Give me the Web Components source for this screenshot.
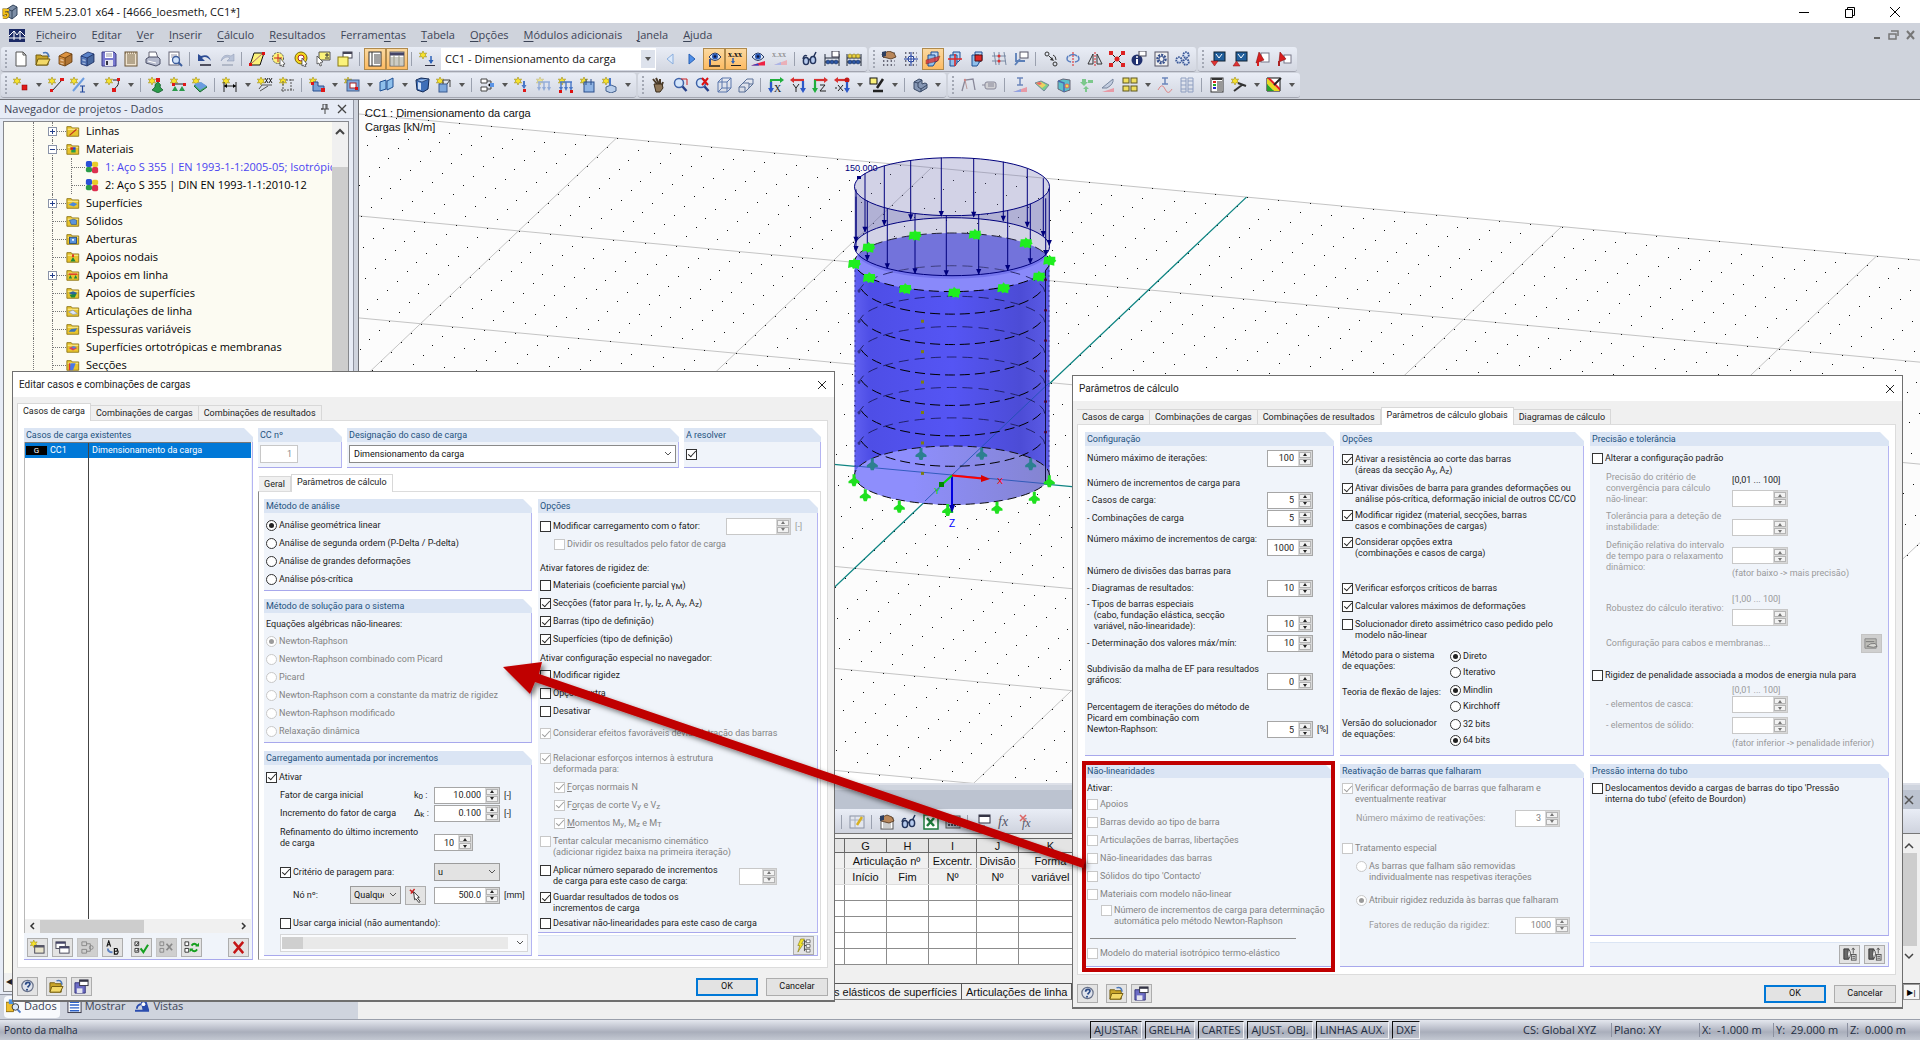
<!DOCTYPE html>
<html lang="pt">
<head>
<meta charset="utf-8">
<title>RFEM 5.23.01 x64 - [4666_loesmeth, CC1*]</title>
<style>
html,body{margin:0;height:100%;overflow:hidden;background:#f0f0f0}
body{font:11px/14px "Open Sans","Noto Sans",sans-serif;color:#1e1e1e}
</style>
</head>
<body>
<rfem-app></rfem-app>
<script>
const star='<path d="M4 0l1 2.4L7.6 2 6.2 4l1.4 2L5 5.6 4 8 3 5.6.4 6 1.8 4 .4 2 3 2.4z" fill="#f7e32a" stroke="#a08c10" stroke-width=".6"/>';
const cube=(c,d)=>`<path d="M2 5l6-3 6 2v7l-6 4-6-3z" fill="${c}" stroke="${d}"/><path d="M2 5l6 2 6-3M8 7v8" fill="none" stroke="${d}"/>`;
const cabinet=(c,d)=>`<path d="M2 5l7-4 6 2v8l-7 4-6-2z" fill="${c}" stroke="${d}" stroke-width=".8"/><path d="M2 5l6 2 7-4M8 7v8" fill="none" stroke="${d}" stroke-width=".8"/><path d="M3 7.500l4 1v2.500l-4-1zM3 11l4 1v2l-4-1z" fill="#fff" opacity=".45" stroke="${d}" stroke-width=".6"/><path d="M8 7l7-4v8l-7 4z" fill="#000" opacity=".2"/>`;
const lens='<circle cx="7" cy="6" r="4.500" fill="#d4e6fb" stroke="#3e62a8" stroke-width="1.500"/><path d="M10.500 9.500l4 4.500" stroke="#27408a" stroke-width="2.500"/>';
const folder='<path d="M1 3h5l1 1.500h7.500V14H1z" fill="#e8c42e" stroke="#8d7312"/><path d="M2 6h12" stroke="#fff3a8"/>';
const axis=(a,b,t)=>`<path d="M2 3h11M3 3v11" stroke="${a}" stroke-width="2.200"/><path d="M12 0l4 3-4 3z" fill="${a}"/><path d="M3 5v9" stroke="${b}" stroke-width="2.200"/><path d="M0 11l3 5 3-5z" fill="${b}"/><text x="6" y="15" font-size="10" font-family="Liberation Serif,serif" fill="#222">${t}</text>`;
const eye='<path d="M2 6q6-8 12 0-6 7-12 0z" fill="#dfe9f8" stroke="#2a3c66"/><circle cx="8" cy="5.500" r="3" fill="#2c5cb8"/><circle cx="8" cy="5.500" r="1.300" fill="#0a1440"/>';
const abacus='<path d="M1 3v12M15 3v12M1 7h14M1 11h14" stroke="#202838" fill="none"/><g fill="#2c56a6" stroke="#10264f" stroke-width=".5"><circle cx="4" cy="11" r="2"/><circle cx="8" cy="11" r="2"/><circle cx="12" cy="11" r="2"/></g>';
const plane='<path d="M1 5l6-2v9l-6 2zM8 4l6-3v9l-6 3z" fill="#8fc0ec" stroke="#1e4f92"/>';
const cutp='<path d="M6 1h7v8l-2 2H6z" fill="#b9d6f4" stroke="#1e4f92"/><path d="M3 4h7v8l-2 3H3z" fill="#8fc0ec" stroke="#1e4f92"/>';
const glasses='<path d="M1 8q1-5 4-3M14 1l-3 6" stroke="#24345c" stroke-width="1.500" fill="none"/><ellipse cx="4" cy="10" rx="2.600" ry="3.600" fill="#b7cbee" stroke="#24345c" stroke-width="1.500"/><ellipse cx="11" cy="9" rx="2.600" ry="3.600" fill="#b7cbee" stroke="#24345c" stroke-width="1.500"/><path d="M6.500 9l2-1" stroke="#24345c" stroke-width="1.500"/>';
const arrowsDown='<path d="M2 5h12M3 5v6M8 5v6M13 5v6" stroke="#4a78c8" stroke-width="1.400" fill="none"/><path d="M1 10l2 4 2-4zM6 10l2 4 2-4zM11 10l2 4 2-4z" fill="#4a78c8"/>';
const hand='<path d="M1 4l7-3 5 2 2 4-5 2-8-2z" fill="#b8865a" stroke="#4a3018" stroke-width=".8"/><path d="M1 2l4-1v5L1 7z" fill="#2c3e60"/>';
const gridd='<path d="M2 2h12M2 6h12M2 10h12M2 14h12" stroke="#445" stroke-width="1.400" stroke-dasharray="1.400 2.400"/>';
const red='<rect x="10" y="10" width="4" height="4" fill="#e01818"/>';
const I={
logo:'<path d="M5 5l6-4 4 2v8l-5 4-5-3z" fill="#7d8ea6" stroke="#33445c"/><path d="M5 5l5 2 5-4M10 7v8" stroke="#33445c" fill="none"/><path d="M7 6H2v4q4-2 4 1t-5 2" fill="none" stroke="#7a5a00" stroke-width="3"/><path d="M7 6H2v4q4-2 4 1t-5 2" fill="none" stroke="#f4c21a" stroke-width="1.800"/>',
bridge:'<rect x="0" y="2" width="16" height="13" fill="#1c2a66"/><path d="M0 11h16M5 4v9M11 4v9M5 4L0 9M5 4l3 4 3-4 5 5" stroke="#fff" fill="none"/>',
doc:'<path d="M3 1h7l3 3v11H3z" fill="#fff" stroke="#555"/><path d="M10 1v3h3" fill="none" stroke="#555"/>',
open:'<path d="M1 4h5l1 1h6v9H1z" fill="#c9a52a" stroke="#725c10"/><path d="M3 8h12l-3 6H1z" fill="#f3d968" stroke="#725c10"/><path d="M8 2q5-2 6 4" stroke="#4a78b8" fill="none" stroke-width="1.600"/>',
cab1:cabinet('#dc9240','#6a3c0c'),cab2:cabinet('#5a82c8','#1c2f66'),
save:'<path d="M1 1h12l2 2v12H1z" fill="#7a7ad0" stroke="#3c3c86"/><rect x="4" y="1" width="8" height="6" fill="#fff"/><rect x="4" y="9" width="8" height="6" fill="#e4e4ee"/><path d="M5 3h6M5 5h6" stroke="#99a"/><rect x="5" y="10" width="2" height="4" fill="#334"/>',
report:'<rect x="2" y="1" width="12" height="14" fill="#efe3cf" stroke="#6a5535"/><path d="M4 4h8M4 6h8M4 8h8M4 10h8M4 12h8" stroke="#7d6a4a"/><path d="M2 2h12" stroke="#6a5535" stroke-dasharray="1 1"/>',
print:'<path d="M4 1h7l2 6H4z" fill="#fff" stroke="#667"/><path d="M1 8l3-2h9l2 2v5l-4 2-10-3z" fill="#b4b9cc" stroke="#4a4f66"/><path d="M3 10l8 2" stroke="#fff"/>',
preview:'<rect x="2" y="1" width="10" height="13" fill="#fff" stroke="#667"/><path d="M4 4h6M4 6h4" stroke="#99a"/><circle cx="9" cy="9" r="3.500" fill="#cfe2fa" stroke="#3c5d9c" stroke-width="1.300"/><path d="M11.500 11.500L15 15" stroke="#3c5d9c" stroke-width="2"/>',
undo:'<path d="M1 3v7h7L5 7q4-3 9 3-2-8-10-5z" fill="#2c4c94"/><path d="M3 14h11" stroke="#223" stroke-width="1.500"/>',
redo:'<path d="M15 3v7H8l3-3Q7 4 2 10q2-8 10-5z" fill="#b9c3d8" stroke="#8a96b0" stroke-width=".5"/><path d="M3 14h11" stroke="#a3abbb" stroke-width="1.500"/>',
plane1:'<path d="M5 2h10l-4 12H1z" fill="#fbf27a" stroke="#111"/><path d="M3 12L14 2" stroke="#a66"/><rect x="0" y="12" width="3" height="3" fill="#d11"/><rect x="13" y="1" width="3" height="3" fill="#d11"/>',
pick1:'<circle cx="7" cy="7" r="5.500" fill="#fbf27a" stroke="#555" stroke-dasharray="2 1"/><path d="M7 3v8M3 7h8" stroke="#c22"/><path d="M9 7l5 6-2 .5 1 2-1.500.5-1-2L9 15z" fill="#fff" stroke="#333" stroke-width=".7"/>',
pick2:'<circle cx="8" cy="7" r="6" fill="#f4d81e" stroke="#7a6900"/><circle cx="8" cy="7" r="3" fill="#fff" stroke="#a22"/><path d="M9 7l5 6-2 .5 1 2-1.500.5-1-2L9 15z" fill="#fff" stroke="#333" stroke-width=".7"/>',
pick3:'<path d="M4 1h11v8H4z" fill="#fbf27a" stroke="#555"/><path d="M10 4h4M12 2v4M10 7h4" stroke="#333"/><path d="M2 5l6 6-2.500.5 1 3-1.500.5-1-3L2 13z" fill="#fff" stroke="#333" stroke-width=".7"/>',
win1:'<rect x="6" y="1" width="9" height="6" fill="#fff" stroke="#445"/><path d="M6 2h9" stroke="#445" stroke-width="2"/><rect x="1" y="6" width="10" height="9" fill="#fbf27a" stroke="#8a7a10"/>',
list:'<rect x="2" y="1" width="12" height="14" fill="#fff" stroke="#333"/><path d="M5 1v14" stroke="#333"/><path d="M7 4h6M7 6h6M7 8h6M7 10h6M7 12h6" stroke="#444"/>',
tbl:'<rect x="1" y="1" width="14" height="14" fill="#fff" stroke="#666"/><path d="M1 3h14" stroke="#446" stroke-width="3"/><path d="M1 7h14M1 9h14M1 11h14M1 13h14M5 4v11M10 4v11" stroke="#998"/>',
newload:star+'<path d="M12 5v7" stroke="#2d62b8" stroke-width="1.500"/><path d="M9.500 9l2.500 4 2.500-4z" fill="#2d62b8"/><path d="M6 14.500h10" stroke="#334"/>',
prev:'<path d="M11 3L5 8l6 5z" fill="#dbe9fb" stroke="#8aaede"/>',next:'<path d="M5 3l6 5-6 5z" fill="#4f8fe8" stroke="#2860b4"/>',
eye1:'<g transform="translate(1 0)">'+eye+'</g><path d="M4 8v6" stroke="#2d4c98" stroke-width="2"/><path d="M3 15h11" stroke="#222" stroke-width="1.500"/>',
xxx:'<text x="0" y="6" font-size="8" font-weight="700" font-family="Liberation Serif,serif" fill="#111">x.xx</text><path d="M5 7v4" stroke="#2d62b8" stroke-width="1.500"/><path d="M3 10l2 3 2-3z" fill="#2d62b8"/><path d="M3 14.500h10" stroke="#222"/>',
eye2:eye+'<path d="M1 14.500L15 10v4.500z" fill="#e24"/><path d="M1 14.500h8l-1-2z" fill="#24c"/>',
xxx2:'<text x="0" y="6" font-size="8" font-family="Liberation Serif,serif" fill="#777">x.xx</text><path d="M2 14L15 9v5z" fill="#eab0b8"/><path d="M2 14h7V11z" fill="#aab6e8"/>',
glasses,aba1:abacus+'<rect x="8" y="0" width="7" height="6" fill="#fff" stroke="#334"/>',aba2:abacus+'<g fill="#e8d040" stroke="#6b5a00" stroke-width=".5"><circle cx="4" cy="5" r="2"/><circle cx="8" cy="5" r="2"/><circle cx="12" cy="5" r="2"/></g>',
handgrid:gridd+'<g transform="translate(0 -1)">'+hand+'</g>',snap:gridd+'<circle cx="8" cy="8" r="3" fill="#fff" stroke="#1c3da0"/><path d="M8 1v14M1 8h14" stroke="#1c3da0"/>',
pl1:cutp+'<path d="M1 9l14-4-2 5-12 3z" fill="#e02828" opacity=".75" stroke="#611" stroke-width=".5"/>',pl2:cutp+'<path d="M1 8h14M8 3v12" stroke="#e02828" stroke-width="1.600"/>',pl3:cutp+'<path d="M6 4h7v6H6z" fill="#e02828" stroke="#511"/>',
net:'<path d="M3 1l2 13M8 1v13M13 1l2 13M1 5h14M1 10h14" stroke="#7a8aa4" fill="none"/><circle cx="8" cy="5" r="1.500" fill="#d33"/><circle cx="8" cy="10" r="1.500" fill="#d33"/>',
frame:'<rect x="7" y="1" width="8" height="6" fill="#fff" stroke="#556"/><path d="M2 14L7 8M3 2v8h9" stroke="#5b7fb8" stroke-width="1.800" fill="none"/>',
move:'<circle cx="4" cy="3" r="2" fill="none" stroke="#333"/><circle cx="12" cy="13" r="2" fill="none" stroke="#333"/><path d="M6 5l3 3M10 4q3 1 3 5" stroke="#333" fill="none"/><path d="M7 9l4 1-2-4z" fill="#333"/>',
rot:'<path d="M13 5q3 5-3 6M3 5q-3 5 3 6M4 5q4-3 8 0" stroke="#5b80c0" stroke-width="1.600" fill="none"/><path d="M8 1v14" stroke="#d22" stroke-dasharray="2 1"/>',
mir:'<path d="M6 3v10H1zM10 3v10h5z" fill="none" stroke="#333"/><path d="M8 1v14" stroke="#d22" stroke-dasharray="2 1"/>',
cross:'<path d="M2 2l12 12M14 2L2 14" stroke="#111"/><g fill="#d22"><rect x="0" y="0" width="4" height="4"/><rect x="12" y="0" width="4" height="4"/><rect x="0" y="12" width="4" height="4"/><rect x="12" y="12" width="4" height="4"/><circle cx="8" cy="8" r="2.500"/></g>',
info:'<circle cx="6" cy="9" r="5.500" fill="#20306e"/><path d="M6 8v5" stroke="#fff" stroke-width="2"/><circle cx="6" cy="6" r="1" fill="#fff"/><rect x="8" y="0" width="7" height="5" fill="#fff" stroke="#445"/>',
gear:'<rect x="2" y="1" width="13" height="14" fill="#f0f0f0" stroke="#556"/><circle cx="8.500" cy="8" r="4" fill="none" stroke="#37508c" stroke-width="2.500" stroke-dasharray="2 1"/><circle cx="8.500" cy="8" r="2.500" fill="none" stroke="#37508c"/>',
gears:'<g fill="#dbe5f6" stroke="#3a5898" stroke-width="1.800" stroke-dasharray="1.600 .8"><circle cx="4" cy="9" r="2.800"/><circle cx="11" cy="4" r="2.800"/><circle cx="11" cy="11" r="2.800"/></g>',
mon1:'<rect x="4" y="1" width="11" height="9" fill="#215f9c" stroke="#123"/><path d="M6 3l3 4 3-4" stroke="#fff" fill="none"/><path d="M1 10h7l-3.500 5z" fill="#e03434" stroke="#811" stroke-width=".5"/>',
mon2:'<rect x="4" y="1" width="11" height="9" fill="#215f9c" stroke="#123"/><path d="M6 3l3 4 3-4" stroke="#fff" fill="none"/><path d="M1 15h7l-3.500-5z" fill="#e03434" stroke="#811" stroke-width=".5"/>',
ex1:'<rect x="7" y="2" width="8" height="9" fill="#fff" stroke="#778"/><path d="M5 1l5 8-8 3z" fill="#d81e1e" stroke="#700" stroke-width=".5"/><path d="M4 11v4" stroke="#d81e1e" stroke-width="2"/>',
ex2:'<rect x="8" y="4" width="7" height="8" fill="#fff" stroke="#778"/><path d="M4 1l6 7-7 3z" fill="#d81e1e" stroke="#700" stroke-width=".5"/><path d="M3 10v5" stroke="#a22" stroke-width="2"/>',
node:star+'<rect x="9" y="8" width="5" height="5" fill="#e01818" stroke="#800" stroke-width=".5"/>',
line:star+'<path d="M4 14L14 3" stroke="#222"/><rect x="2" y="12" width="3" height="3" fill="#e01818"/><rect x="12" y="1" width="4" height="3" fill="#e01818"/>',
bar:star+'<path d="M3 14L14 1" stroke="#6c9de0" stroke-width="2"/><path d="M10 9h5M12.500 9v6M10 15h5" stroke="#22489c" stroke-width="1.200"/>',
arc:star+'<path d="M8 3h5q2 5-4 9" fill="none" stroke="#222"/><rect x="12" y="1" width="3" height="3" fill="#e01818"/><rect x="7" y="11" width="4" height="4" fill="#e01818"/>',
sup1:star+'<rect x="8" y="1" width="4" height="4" fill="#e01818"/><path d="M10 5q4 3 2 5l3 3-5 3-6-3 3-3q-1-3 3-5z" fill="#2b9a4a" stroke="#0e5424" stroke-width=".7"/>',
sup2:star+'<path d="M3 7h12" stroke="#222"/><rect x="2" y="6" width="3" height="3" fill="#e01818"/><rect x="13" y="6" width="3" height="3" fill="#e01818"/><path d="M5 9l3 5H2zM12 9l3 5H9z" fill="#2b9a4a"/>',
sup3:star+'<path d="M2 9l7-3 6 4-7 5z" fill="#4ab06c" stroke="#1c6836"/><path d="M2 7l7-2 6 4-7 4z" fill="#6a9ce0"/>',
dim:star+'<path d="M2 5v10M14 5v10M2 9h12" stroke="#222"/><path d="M2 9l3-2v4zM14 9l-3-2v4z"/>',
dimxx:star+'<path d="M8 1l3 5M11 1L8 6M12 1l3 5M15 1l-3 5" stroke="#111" stroke-width=".9"/><path d="M2 12l3-4h10M3 14l8-5" stroke="#555" fill="none"/>',
axes:star+'<path d="M4 4v11M12 2v12M2 13h13M7 3h8" stroke="#555" stroke-dasharray="2 1"/>',
surf:star+'<path d="M4 5h5v4h6v5H4z" fill="#7aa0d4" stroke="#274e90"/><rect x="2" y="5" width="3" height="3" fill="#e01818"/><rect x="12" y="11" width="4" height="4" fill="#e01818"/>',
hole:star+'<rect x="3" y="3" width="12" height="11" fill="#7fa8dc" stroke="#44618e"/><rect x="6" y="6" width="6" height="5" fill="#fff" stroke="#a22"/><rect x="11" y="10" width="3" height="3" fill="#d11"/>',
sol:plane,cyl:'<path d="M2 3l5-2 8 1-1 10-5 3-6-2z" fill="#3f6fb8" stroke="#122a58"/><path d="M2 3l6 2 7-3" fill="#9fc2f0" stroke="#122a58" stroke-width=".6"/><path d="M4 5l3 1v7l-3-1z" fill="#cfe0f8"/>',
cube2:star+'<rect x="3" y="7" width="8" height="8" fill="#7fa8dc" stroke="#3a5a90"/><path d="M7 3h7v7" fill="none" stroke="#444"/><path d="M7 3v4M14 3l-3 4" stroke="#444"/>',
rel:'<path d="M2 2h6v4H2zM2 10h6v4H2z" fill="#fff" stroke="#444"/><path d="M8 4h4v8H8" fill="none" stroke="#444"/><path d="M9 8l3-2.500v5z" /><rect x="11" y="6" width="4" height="4" fill="#5a94e6"/>',
ld1:star+'<path d="M10 4v7" stroke="#4a78c8" stroke-width="2"/><path d="M7.500 8l2.500 4 2.500-4z" fill="#4a78c8"/><rect x="9" y="12" width="3" height="3" fill="#e01818"/>',
ld2:'<g opacity=".5">'+star+arrowsDown+'</g>',ld3:star+arrowsDown+'<rect x="1" y="13" width="3" height="3" fill="#d11"/><rect x="12" y="13" width="3" height="3" fill="#d11"/>',
ld4:star+'<rect x="4" y="5" width="10" height="10" fill="#8fb4e4" stroke="#2a4e8c"/><path d="M6 2v6M11 2v6" stroke="#2a4e8c"/>',ld5:star+'<path d="M4 10l5-2 5 2v4l-5 2-5-2z" fill="#b8cdea" stroke="#44618e"/><path d="M8 1v8" stroke="#4a78c8" stroke-width="2"/>',
hand:'<path d="M3 2l4 5M6 1l3 6M10 2v6M13 5l-2 5" stroke="#4a3a28" stroke-width="2"/><path d="M4 7h8l1 4-3 4H6z" fill="#8e7658" stroke="#3a2d1c"/>',
zoom1:lens+'<path d="M9 2h6v6" stroke="#c22" fill="none"/>',zoom2:lens+'<path d="M8 1l6 7M14 1L8 8" stroke="#d11" stroke-width="2"/>',
wire:'<path d="M2 5l4-4h9v10l-4 4H2zM2 5h9v10M11 5l4-4M6 1v10h9M6 11l-4 4" fill="none" stroke="#5a76ac"/>',
boxes:'<path d="M1 10h6v5H1zM5 6h6v5M9 2h6v5h-4M1 10l4-4M7 15l8-8M5 6l4-4" fill="none" stroke="#5a7198"/>',
ax1:axis('#1fae3c','#2c58c8','X'),ax2:'<g transform="translate(16 0) scale(-1 1)"><path d="M2 3h11" stroke="#d83030" stroke-width="2.200"/><path d="M12 0l4 3-4 3z" fill="#d83030"/><path d="M3 4v10" stroke="#2c58c8" stroke-width="2.200"/><path d="M0 11l3 5 3-5z" fill="#2c58c8"/></g><path d="M3 7l3 4 3-4M6 11v4" stroke="#222" fill="none"/>',ax3:'<path d="M2 3h11" stroke="#d83030" stroke-width="2.200"/><path d="M12 0l4 3-4 3z" fill="#d83030"/><path d="M3 3v11" stroke="#1fae3c" stroke-width="2.200"/><path d="M0 11l3 5 3-5z" fill="#1fae3c"/><path d="M8 8h5l-5 6h6" stroke="#222" fill="none"/>',ax4:'<path d="M3 3h8" stroke="#d83030" stroke-width="2.200"/><path d="M4 0L0 3l4 3z" fill="#d83030"/><circle cx="13" cy="3" r="2.500" fill="#c01818"/><path d="M13 5v9" stroke="#2c58c8" stroke-width="2.200"/><path d="M10 11l3 5 3-5z" fill="#2c58c8"/><path d="M1 11h2M4 8l5 6M9 8l-5 6" stroke="#222"/>',
micro:'<rect x="1" y="1" width="7" height="6" fill="#fbf27a" stroke="#111"/><path d="M14 2L8 11M4 14h10" stroke="#222" stroke-width="2.500"/>',
vol:'<path d="M2 5l5-3 3 1v4l3-1 2 1v4l-7 4-6-3z" fill="#8697b4" stroke="#3a4a66"/><path d="M2 5l4 1v4l3 2v3M6 6l4-3M9 12l6-4" fill="none" stroke="#3a4a66"/>',
fr:'<path d="M2 14L5 3l8-1 2 11" fill="none" stroke="#889" stroke-width="1.300"/><path d="M5 3l2 9" stroke="#b99"/><circle cx="5" cy="3" r="1.200" fill="#c88"/>',
film:'<rect x="3" y="5" width="11" height="7" rx="2" fill="#d0d0d4" stroke="#889"/><path d="M3 8H0M6 7h6M6 9h6" stroke="#889"/>',
ib:'<path d="M5 1h6M8 1v7M5 8h6" stroke="#6c86bc" stroke-width="1.500"/><path d="M1 15h14v-5z" fill="#e79aa6"/><path d="M1 15h8v-3z" fill="#8fa4e4"/>',
rainb:'<path d="M1 6l6-2 8 4-5 6z" fill="#7ad08c" stroke="#789"/><path d="M2 6l5-1 5 3-4 3z" fill="#f0d060"/><path d="M2 6l4-1 2 2-3 1z" fill="#e66"/>',
rc:'<path d="M2 4l5-2 7 1v10l-6 2-6-3z" fill="#5cc0cc" stroke="#667"/><path d="M2 4l6 2v9" stroke="#4a68b0" fill="none" stroke-width="1.500"/><circle cx="11" cy="9" r="2" fill="#e8e050" stroke="#d66"/>',
gr:'<path d="M4 2h4v3h2L6 9 2 5h2zM10 3h5v3h-5z" fill="#7cc88c"/><path d="M5 12l3-3 3 3H9v3H7v-3z" fill="#7cc88c"/>',
knife:'<path d="M2 11L13 2q1 5-6 9z" fill="#c3cde0" stroke="#78879f"/><path d="M2 15h12v-4z" fill="#e79aa6"/>',
four:'<g fill="#f0e060" stroke="#5d5620"><rect x="1" y="1" width="6" height="5"/><rect x="9" y="1" width="6" height="5"/><rect x="1" y="9" width="6" height="5"/><rect x="9" y="9" width="6" height="5"/></g>',
mode:'<path d="M5 1h6M8 1v6M5 7h6" stroke="#6c86bc" stroke-width="1.500"/><path d="M1 13q4-8 7-1t7 0" stroke="#d88" fill="none"/>',
cols:'<g fill="none" stroke="#8e9ec0"><path d="M2 1h5v14H2zM9 1h5v14H9zM2 4h5M2 8h5M2 12h5M9 4h5M9 8h5M9 12h5"/></g>',
legend:'<rect x="2" y="1" width="12" height="14" fill="#fff" stroke="#333"/><path d="M3 2h10" stroke="#333" stroke-width="2"/><path d="M4 5h3" stroke="#d22" stroke-width="2"/><path d="M4 8h3" stroke="#2a2" stroke-width="2"/><path d="M4 11h3" stroke="#22c" stroke-width="2"/><path d="M8 5h5M8 7h5M8 9h5M8 11h5M8 13h5" stroke="#333"/>',
wand:star+'<path d="M7 6l8 3M3 14l8-6" stroke="#333" stroke-width="2"/>',
colr:'<path d="M1 1h13v13H1z" fill="#fff" stroke="#111"/><path d="M1 1l13 13H8L1 7z" fill="#e8d820"/><path d="M1 7l7 7H1z" fill="#28a028"/><path d="M1 1l13 13V11L4 1z" fill="#d22"/><path d="M15 1L8 8" stroke="#222" stroke-width="2"/>',
tedit:'<rect x="1" y="2" width="14" height="12" fill="#e3e6ee" stroke="#8a92a4"/><path d="M1 6h14M6 2v12" stroke="#a8b0c0"/><path d="M13 3l-5 8" stroke="#d8b020" stroke-width="2.500"/>',
thand:'<rect x="2" y="4" width="12" height="11" fill="#fff" stroke="#555"/><path d="M4 9h8M4 11h8M4 13h8" stroke="#999"/>'+hand,
excel:'<rect x="1" y="1" width="14" height="14" fill="#fff" stroke="#1e7a3c" stroke-width="1.500"/><path d="M4 4l7 8M11 4l-7 8" stroke="#1e7a3c" stroke-width="2.500"/>',
calc:'<rect x="1" y="2" width="14" height="12" fill="#b9bfca" stroke="#555"/><path d="M3 5h10M3 8h10M3 11h10" stroke="#445" stroke-width="2" stroke-dasharray="2 1"/>',
win2:'<rect x="4" y="1" width="11" height="8" fill="#fff" stroke="#334"/><path d="M4 2h11" stroke="#334" stroke-width="2"/><path d="M2 12h8M5 14h8" stroke="#555"/>',
fx:'<text x="1" y="12" font-size="14" font-style="italic" font-family="Liberation Serif,serif" fill="#556">fx</text>',
fxr:'<text x="3" y="13" font-size="12" font-style="italic" font-family="Liberation Serif,serif" fill="#556">fx</text><path d="M1 1l6 6M7 1L1 7" stroke="#d66" stroke-width="1.500"/>',
help:'<circle cx="8" cy="7.500" r="6" fill="#dfe3ec" stroke="#68728a" stroke-width="1.300"/><path d="M6 6q0-2.500 2.500-2.500t2 2.500Q9.500 7.500 8 9" stroke="#2b4a86" stroke-width="1.800" fill="none"/><circle cx="7.500" cy="11.500" r="1.100" fill="#2b4a86"/>',
save2:'<path d="M1 4h11v11H1z" fill="#6c6cc4" stroke="#33337a"/><rect x="3" y="10" width="6" height="5" fill="#e4e4ee"/><rect x="6" y="1" width="9" height="6" fill="#fff" stroke="#334"/><path d="M6 2h9" stroke="#334" stroke-width="2"/>',
nwin:star+'<rect x="5" y="6" width="10" height="8" fill="#e9e4cc" stroke="#445"/><path d="M5 7h10" stroke="#556" stroke-width="2"/>',
cwin:'<rect x="1" y="2" width="10" height="7" fill="#fff" stroke="#445"/><path d="M1 3h10" stroke="#446" stroke-width="2"/><rect x="5" y="7" width="10" height="7" fill="#fff" stroke="#445"/><path d="M5 8h10" stroke="#446" stroke-width="2"/>',
cmb:'<g fill="none" stroke="#888"><path d="M2 2h5v4H2zM2 10h5v4H2zM7 4h4v8H7"/><circle cx="12" cy="8" r="2"/></g>',
ab:'<path d="M2 7l2-6 2 6M3 5h2M10 9h2q2 0 1 2 2 1 0 4h-3zM10 12h3" stroke="#111" stroke-width="1.200" fill="none"/><path d="M3 9q0 4 5 4" stroke="#5b80c0" stroke-width="2" fill="none"/>',
chk:'<path d="M1 2h4v4H1zM1 9h4v4H1z" fill="#fff" stroke="#333"/><path d="M2 4l1 1 2-3M2 11l1 1 2-3" stroke="#333" fill="none"/><path d="M7 9l3 4 5-8" stroke="#16a020" stroke-width="2.200" fill="none"/>',
uchk:'<path d="M1 2h4v4H1zM1 9h4v4H1z" fill="none" stroke="#888"/><path d="M8 4l6 7M14 4l-6 7" stroke="#888" stroke-width="1.800"/>',
swp:'<path d="M1 2h4v4H1zM1 9h4v4H1z" fill="#fff" stroke="#333"/><path d="M8 6q3-4 6 0M14 10q-3 4-6 0" stroke="#16a020" stroke-width="2" fill="none"/><path d="M12 7h4V3zM10 9H6v4z" fill="#16a020"/>',
del:'<path d="M3 2l10 12M13 2L3 14" stroke="#c41414" stroke-width="2.600"/>',
pick:'<path d="M2 2l5 4M7 1L3 6" stroke="#c22" stroke-width="1.500"/><path d="M6 4l6 6-2 .5 3 4-1.500 1-3-4-1.500 1z" fill="#fff" stroke="#333"/>',
bolt:'<path d="M5 1h4L6 6h2l-6 9 2-7H2z" fill="#f4e42a" stroke="#77700e" stroke-width=".6"/><path d="M9 2v12M9 4h6M9 8h6M9 12h6" stroke="#444"/><path d="M11 2h4v3h-4zM11 7h4v3h-4zM11 12h4v3h-4z" fill="#fff" stroke="#444" stroke-width=".7"/>',
cfg:'<path d="M1 3h12v10H1z" fill="#bdbdb8" stroke="#888"/><path d="M2 6h9M3 11q4-4 9-3l2 3-4 1z" fill="#d8d8d4" stroke="#777"/>',
cl1:'<path d="M2 2h5q-2 6 0 11H2z" fill="#6a6a6a" stroke="#333"/><path d="M7 2q4 5 0 11-2-5 0-11z" fill="#fff" stroke="#444"/><path d="M12 1v6M10.500 3L12 1l1.500 2" stroke="#555" fill="none"/><rect x="10" y="8" width="5" height="6" fill="#ddd" stroke="#555"/><path d="M11 10h3M11 12h3" stroke="#555"/>',
tdata:'<path d="M0 4h8v10H0z" fill="#f0c030" stroke="#8d6c10"/><path d="M3 1h5v5H3z" fill="#4a90e0"/><circle cx="10" cy="9" r="3.500" fill="#d9e8fb" stroke="#333"/><path d="M12.500 12l3 3" stroke="#4a78c8" stroke-width="2"/>',
tshow:'<rect x="1" y="1" width="14" height="14" fill="#fff" stroke="#334"/><path d="M3 4h10M3 7h10M3 10h10M3 13h10" stroke="#2d62c8" stroke-width="1.500"/>',
tview:'<path d="M6 2h6l3 10H8zM0 12h15v2H0z" fill="#2a4cae"/><path d="M2 11q0-5 6-5" stroke="#2a4cae" stroke-width="2" fill="none"/><circle cx="9" cy="6" r="2" fill="#fff"/>',
mat:'<rect x="1" y="1" width="7" height="7" rx="2" fill="#2a50d8"/><rect x="8" y="2" width="7" height="6" rx="2" fill="#e8cc2a"/><rect x="1" y="8" width="7" height="6" rx="2" fill="#2a9c48"/><rect x="8" y="8" width="7" height="7" rx="2" fill="#dc3050"/>'
};
const F={fline:'<path d="M4 13l8-7" stroke="#c03020" stroke-width="1.300"/>',fmat:'<path d="M5 6h3v3H5z" fill="#c22"/><path d="M8 6h3v3H8z" fill="#24c"/><path d="M6 9h5v3H6z" fill="#2a9c48"/>',fsurf:'<path d="M3 10l5-3 5 2-4 3z" fill="#4a88dc"/>',fsol:'<path d="M4 7l5-1 3 1v5H6z" fill="#5a94dc" stroke="#1e4480" stroke-width=".6"/>',fop:'<rect x="4" y="6" width="8" height="7" fill="#5a94dc" stroke="#1e4480"/><rect x="7" y="8" width="2" height="2" fill="#fff"/>',fnod:'<rect x="7" y="5" width="2" height="3" fill="#d22"/><path d="M8 8l3 5H5z" fill="#1d8a3a"/>',flin:'<path d="M3 7h10" stroke="#d22" stroke-width="1.500"/><path d="M5 8l2 4H3zM11 8l2 4H9z" fill="#1d8a3a"/>',fsup:'<path d="M3 8l5-2 5 2-4 3z" fill="#2c64a0"/><path d="M4 10l2 3h4l2-4z" fill="#1d8a3a"/>',fart:'<path d="M3 9l5-2 5 4-5 1z" fill="#dfe8f8" stroke="#6c86bc" stroke-width=".6"/>',fesp:'<path d="M3 11l3-3 7-1-3 4z" fill="#3c74b8"/>',fort:'<path d="M3 9l5-2 5 2-5 3z" fill="#d8425c"/><path d="M6 8l3-1 3 1-3 2z" fill="#4a88dc"/>',fsec:'<path d="M5 6h6l-3 8H4z" fill="#4a78e8"/><path d="M4 6v8" stroke="#d33" stroke-width="1.500"/>'};
for(const k in F)I[k]=folder+F[k];

const define=(name,css,html,init)=>customElements.define(name,class extends HTMLElement{
 constructor(){super();this.attachShadow({mode:'open'})}
 connectedCallback(){this.shadowRoot.innerHTML='<style>*{box-sizing:border-box}'+css+'</style>'+(typeof html==='function'?html(this):html);if(init)init(this,this.shadowRoot)}
});
const at=(e,n,d='')=>e.getAttribute(n)??d;

define('app-icon',':host{display:inline-flex;width:16px;height:16px;flex:none}svg{width:100%;height:100%;display:block}',
 e=>`<svg viewBox="0 0 16 16" aria-hidden="true">${I[at(e,'name')]||''}</svg>`);

define('tool-strip',`:host{display:flex;align-items:center;height:25px;padding-right:2px;background:linear-gradient(#e9edf6,#d3d7e1);border-bottom:1px solid #a2a5b0;border-radius:3px;flex:none}
 .grip{width:2px;height:18px;margin:0 3px 0 4px;background:repeating-linear-gradient(#a3a8b4 0 2px,transparent 2px 4px)}
 button{width:22px;height:22px;border:0;padding:0;background:none;display:flex;align-items:center;justify-content:center}
 button.on{background:linear-gradient(#fbd9a0,#fdbb62);border:1px solid #b08a4c}
 .dd{width:13px}.dd::before{content:"";border:solid transparent;border-width:4px 3px 0;border-top-color:#555}
 i{width:1px;height:14px;margin:0 4px 0 3px;background:#9aa0ae}
 slot{display:contents}`,
 e=>'<span class="grip"></span>'+at(e,'items').split(' ').map(n=>n==='|'?'<i></i>':n==='v'?'<button class="dd" aria-label="Mais"></button>':n==='@'?'<slot></slot>':n[0]==='*'?`<button class="on" aria-label="${n.slice(1)}"><app-icon name="${n.slice(1)}"></app-icon></button>`:`<button aria-label="${n}"><app-icon name="${n}"></app-icon></button>`).join(''));

define('app-header',`:host{display:block;background:#cfd3dc;flex:none}
 .title{height:23px;background:#fff;display:flex;align-items:center;gap:6px;padding-left:2px;color:#111}
 .ctl{margin-left:auto;display:flex;width:136px;justify-content:space-between;padding:0 19px 0 14px}
 .ctl button,.mdi button{border:0;background:none;padding:0;width:12px;height:12px}
 .ctl svg,.mdi svg{display:block;width:12px;height:12px}
 nav{height:24px;display:flex;align-items:center;padding-left:9px;color:#3c4456}
 nav a{color:inherit;text-decoration:none;margin-right:15px}
 nav app-icon{margin-right:11px}
 .mdi{margin-left:auto;display:flex;gap:5px;padding-right:3px}
 .bar{display:flex;gap:2px;height:26px;padding-left:1px}
 .edge{height:1px;background:#6e7076}
 .cb{display:flex;align-items:center;width:215px;height:22px;margin:0 3px;background:#fff;border-right:1px solid #fff;position:relative}
 .cb select{appearance:none;flex:1;height:22px;border:0;background:none;font:inherit;color:#111;padding:0 18px 0 4px;margin:0}
 .cb span{width:14px;height:18px;background:#dde2ec;display:flex;align-items:center;justify-content:center;margin-left:-14px;pointer-events:none}
 .cb span::before{content:"";border:solid transparent;border-width:4px 3px 0;border-top-color:#555}
 u{text-underline-offset:2px}`,
 `<div class="title"><app-icon name="logo"></app-icon><span>RFEM 5.23.01 x64 - [4666_loesmeth, CC1*]</span>
 <div class="ctl"><button aria-label="Minimizar"><svg viewBox="0 0 12 12"><path d="M1 6.500h10" stroke="#000"/></svg></button><button aria-label="Restaurar"><svg viewBox="0 0 12 12"><path d="M1.500 3.500h7v8h-7zM3.500 3.500v-2h7v8h-2" fill="none" stroke="#000"/></svg></button><button aria-label="Fechar"><svg viewBox="0 0 12 12"><path d="M1 1l10 10M11 1L1 11" stroke="#000"/></svg></button></div></div>
 <nav><app-icon name="bridge"></app-icon>${['|F|icheiro','E|d|itar','|V|er','|I|nserir','|C|álculo','|R|esultados','Ferrame|n|tas','|T|abela','|O|pções','|M|ódulos adicionais','|J|anela','|A|juda'].map(s=>{const p=s.split('|');return `<a href="#">${p[0]}<u>${p[1]}</u>${p[2]}</a>`}).join('')}
 <div class="mdi"><button aria-label="Minimizar documento"><svg viewBox="0 0 12 12"><path d="M3 9h6" stroke="#666" stroke-width="2"/></svg></button><button aria-label="Restaurar documento"><svg viewBox="0 0 12 12"><path d="M1 5h7v5H1zM3 2h7v5" fill="none" stroke="#777" stroke-width="1.500"/></svg></button><button aria-label="Fechar documento"><svg viewBox="0 0 12 12"><path d="M2 2l7 8M9 2l-7 8" stroke="#777" stroke-width="2"/></svg></button></div></nav>
 <div class="bar"><tool-strip items="doc open cab1 cab2 save report print preview | undo redo | plane1 pick1 pick2 pick3 win1 | *list *tbl | newload @ prev next *eye1 *xxx eye2 xxx2 | glasses aba1 aba2"><span class="cb"><select aria-label="Caso de carga"><option>CC1 - Dimensionamento da carga</option></select><span></span></span></tool-strip>
 <tool-strip items="handgrid snap *pl1 pl2 pl3 net frame | move rot mir cross info gear gears"></tool-strip><tool-strip items="mon1 mon2 ex1 ex2"></tool-strip></div>
 <div class="bar"><tool-strip items="node v line bar v arc v | sup1 sup2 sup3 | dim v dimxx axes | surf v hole v sol v cyl cube2 v | rel v ld1 ld2 ld3 ld4 ld5 v"></tool-strip><tool-strip items="hand zoom1 zoom2 wire boxes | ax1 ax2 ax3 ax4 v micro v | vol v"></tool-strip><tool-strip items="fr film | ib rainb rc gr knife four v mode cols | legend wand v colr v"></tool-strip></div>
 <div class="edge"></div>`);

define('tree-row',`:host{display:flex;align-items:center;height:18px;color:#000;white-space:nowrap}
 .ln{align-self:stretch;width:19px;flex:none;border-right:1px dotted #777}.ln.a{width:30px}
 .k{width:13px;flex:none;border-top:1px dotted #777}
 .b{width:9px;height:9px;flex:none;margin:0 0 0 -5px;z-index:1;border:1px solid #8a93a8;background:#fff}
 .b svg{display:block;width:7px;height:7px}
 .b+.k{width:9px} app-icon{width:14px;height:14px;margin-right:6px}`,
 e=>{const b=at(e,'box');return `<span class="ln a"></span><span class="ln"></span>${e.hasAttribute('child')?'<span class="ln"></span>':''}${b?`<span class="b"><svg viewBox="0 0 7 7"><path d="M1 3.500h5${b==='+'?'M3.500 1v5':''}" stroke="#24408c"/></svg></span>`:''}<span class="k"></span><app-icon name="${at(e,'icon')}"></app-icon><slot></slot>`});

define('project-navigator',`:host{display:flex;flex-direction:column;width:358px;flex:none;background:#cfd4de}
 .panel{flex:1;min-height:0;display:flex;flex-direction:column;background:#e7ecf6;width:354px;border-right:1px solid #8f93a0;border-bottom:1px solid #8f93a0}
 h2{margin:0;font:inherit;height:19px;display:flex;align-items:center;padding:0 6px 0 4px;color:#3c4456;border-bottom:1px solid #b6bbc8}
 h2 span{flex:1} h2 svg{width:10px;height:10px;margin-left:7px}
 .box{margin:2px 4px 2px 3px;flex:1;min-height:0;border:1px solid #85878c;background:#fcfbf2;display:flex;flex-direction:column}
 .mid{flex:1;min-height:0;display:flex}
 .tree{flex:1;overflow:hidden;min-width:0}
 .sb{width:16px;background:#f0f0f0;display:flex;flex-direction:column}
 .sb svg{width:16px;height:45px}.sb i{flex:1;background:#cdcdcd}
 .hs{height:18px;background:#f0f0f0;font:8px/18px "DejaVu Sans",sans-serif;padding-left:2px}
 .tabs{height:24px;display:flex;align-items:center;padding-left:4px;color:#3c4456;flex:none;gap:5px}
 .tabs button{display:flex;gap:3px;align-items:center;border:0;background:none;font:inherit;color:inherit;padding:0 3px 2px 2px;height:22px;border-radius:4px}
 .tabs .on{background:#f8fafd}.tabs app-icon{width:15px}`,
 `<div class="panel"><h2><span>Navegador de projetos - Dados</span><svg viewBox="0 0 10 10"><path d="M3 0v5H1M3 0h4v5M9 5H1M5 5v5M6 0v5" stroke="#444" fill="none"/></svg><svg viewBox="0 0 10 10"><path d="M1 1l8 8M9 1L1 9" stroke="#444" stroke-width="1.300"/></svg></h2>
 <div class="box"><div class="mid"><div class="tree">
 <tree-row icon="fline" box="+">Linhas</tree-row><tree-row icon="fmat" box="-">Materiais</tree-row>
 <tree-row child icon="mat"><span style="color:#4a44f0">1: Aço S 355 | EN 1993-1-1:2005-05; Isotrópico</span></tree-row><tree-row child icon="mat">2: Aço S 355 | DIN EN 1993-1-1:2010-12</tree-row>
 <tree-row icon="fsurf" box="+">Superfícies</tree-row><tree-row icon="fsol">Sólidos</tree-row><tree-row icon="fop">Aberturas</tree-row><tree-row icon="fnod">Apoios nodais</tree-row><tree-row icon="flin" box="+">Apoios em linha</tree-row><tree-row icon="fsup">Apoios de superfícies</tree-row><tree-row icon="fart">Articulações de linha</tree-row><tree-row icon="fesp">Espessuras variáveis</tree-row><tree-row icon="fort">Superfícies ortotrópicas e membranas</tree-row><tree-row icon="fsec">Secções</tree-row>
 </div><div class="sb"><svg viewBox="0 0 16 45"><path d="M4 12l4-4 4 4" fill="none" stroke="#444" stroke-width="2"/></svg><i></i></div></div><div class="hs">◀</div></div></div>
 <div class="tabs"><button class="on"><app-icon name="tdata"></app-icon>Dados</button><button><app-icon name="tshow"></app-icon>Mostrar</button><button><app-icon name="tview"></app-icon>Vistas</button></div>`);

define('model-view',`:host{display:block;flex:1;min-height:0;overflow:hidden;background:#fff;border-left:1px solid #6e7076}
 svg{display:block;width:100%;height:100%}text{font:11px "Liberation Sans",sans-serif}`,
 ()=>{
 const ox=952.5,oy=475.5,ux=31.5,uy=2.95,vx=-9.8,vy=9.28,P=(i,j)=>[ox+i*ux+j*vx,oy+i*uy+j*vy].map(n=>n.toFixed(1));
 let dots='',lines='';
 for(let i=-30;i<=30;i++)for(let j=-30;j<=30;j++){const p=P(i,j);if(p[0]>358&&p[0]<1920&&p[1]>100&&p[1]<785)dots+=`M${Math.round(p[0])} ${Math.round(p[1])}h1v1h-1z`}
 for(let k=-30;k<=30;k+=10)if(k){lines+=`M${P(-30,k)}L${P(30,k)}M${P(k,-30)}L${P(k,30)}`}
 const poly=[P(-30,-30),P(30,-30),P(30,30),P(-30,30)].join(' ');
 const Z=(x,y)=>[780+x/3,130+y/3];
 let load='',heads='';
 [[228,178,335],[255,130,305],[313,107,285],[392,92,268],[484,83,258],[581,85,260],[670,95,272],[742,115,290],[790,145,318],[808,175,345],[228,200,363],[262,212,390],[322,235,415],[405,250,430],[499,257,436],[596,253,432],[683,243,420],[751,222,400],[797,205,375]].forEach(([x,a,b])=>{const p=Z(x,a),q=Z(x,b);load+=`M${p[0].toFixed(1)} ${p[1].toFixed(1)}V${q[1].toFixed(1)}`;heads+=`M${(q[0]-2.6).toFixed(1)} ${(q[1]-5).toFixed(1)}h5.200l-2.600 6z`});
 const sup=(a,c)=>a.map(([x,y])=>{const p=Z(x,y);return `<path transform="translate(${p[0].toFixed(1)} ${p[1].toFixed(1)})" d="M-1.500-6h3v4l4 3v2h-3l-1 3h-3l-1-3h-3v-2l4-3z" fill="${c}"/>`}).join('');
 const cub=a=>a.map(([x,y])=>{const p=Z(x,y);return `<path transform="translate(${p[0].toFixed(1)} ${p[1].toFixed(1)})" d="M-5-3h4l1-2 2 2h4v3l1 1-2 2v3l-4-1-2 1-1-2-4 1z" fill="#1fee1f"/>`}).join('');
 const rings=[1,2,3,4,5,6].map(k=>{const y=262.3+k*30.43;return `<path d="M859 ${y}a93 27 0 0 1 186 0" fill="none" stroke="#15154a" stroke-width=".8" stroke-dasharray="10 6"/><path d="M861 ${y-4}a93 32 0 0 0 182 0" fill="none" stroke="#000" stroke-dasharray="10 5"/><rect x="921" y="${y+27}" width="3" height="3" fill="#7d7d10"/><circle cx="859" cy="${y-2}" r="1.500" fill="#33338a"/><circle cx="1045.500" cy="${y-13}" r="1.500" fill="#700020"/>`}).join('');
 return `<svg><defs><linearGradient id="b"><stop offset="0" stop-color="#6060f0"/><stop offset=".08" stop-color="#4e4ee6"/><stop offset=".5" stop-color="#5555f4"/><stop offset=".85" stop-color="#4c4cd6"/><stop offset="1" stop-color="#5c5ce6"/></linearGradient><linearGradient id="c"><stop offset=".3" stop-color="#8e8efc"/><stop offset="1" stop-color="#8484d0"/></linearGradient></defs>
 <g transform="translate(-359 -100)"><polygon points="${poly}" fill="#fcfcfc"/><path d="${lines}" stroke="#c4c4c4" fill="none"/><path d="${dots}" fill="#111"/>
 <path d="M${P(-30,0)}L${P(30,0)}M${P(0,-30)}L${P(0,30)}" stroke="#0e8482" stroke-width="1.300"/>
 <path d="M854.500 262.300V475.300a97.500 29.300 0 0 0 195 0V262.300z" fill="url(#b)"/>
 <ellipse cx="952" cy="475.300" rx="97.500" ry="29.300" fill="url(#c)" stroke="#111" stroke-dasharray="9 5"/>
 <path d="M1049 383L952 475M855 466L1049 484M952 475L925 501" stroke="#1c50b0" opacity=".8"/>
 <ellipse cx="952" cy="262.300" rx="97.500" ry="29.300" fill="#8989fa"/><path d="M857 256a97.500 29.300 0 0 1 190 0a97.500 29.300 0 0 1 -190 0z" fill="#7474ec"/>
 <ellipse cx="952" cy="262.300" rx="97.500" ry="29.300" fill="none" stroke="#000" stroke-dasharray="10 5"/>${rings}
 <path d="M1045.500 270v213" stroke="#101040"/><path d="M855 265v210M1049 265v210" stroke="#2a2a70" stroke-dasharray="2 3" stroke-width=".7"/>
 <path d="M854.500 186.700a97.500 29 0 0 1 195 0V246.700a97.500 29 0 0 1 -195 0z" fill="#7070b4" fill-opacity=".3"/>
 <path d="M854.500 186.700a97.500 29 0 0 0 195 0V246.700a97.500 29 0 0 0 -195 0z" fill="#5c5ca8" fill-opacity=".28"/>
 <ellipse cx="952" cy="186.700" rx="97.500" ry="29" fill="none" stroke="#00007c"/><ellipse cx="952" cy="246.700" rx="97.500" ry="29" fill="none" stroke="#00007c"/>
 <path d="${load}" stroke="#00007c" fill="none"/><path d="${heads}" fill="#00007c"/><rect x="857" y="176" width="4" height="3" fill="#00007c"/>
 ${cub([[265,350],[404,314],[584,311],[737,337],[808,389],[776,437],[670,472],[522,485],[375,474],[267,441],[222,399]])}
 ${sup([[423,972],[605,971],[752,1003],[277,1003]],'#2c8090')}${sup([[222,1051],[256,1096],[358,1130],[503,1140],[651,1133],[763,1103],[808,1054]],'#1fe01f')}
 <path d="M952 475.500v32" stroke="#0000e0" stroke-width="2"/><path d="M949 505h6l-3 8z" fill="#0000b0"/><path d="M952 475.500l30 3" stroke="#f00" stroke-width="2"/><path d="M981 475l9 4-9 3z" fill="#d00"/><path d="M952 475.500l-10 9" stroke="#0d0" stroke-width="2"/><rect x="939" y="482" width="5" height="5" fill="#080"/>
 <text x="997" y="484" fill="#f00" style="font-size:9px">X</text><text x="934" y="494" fill="#0d0" style="font-size:9px">Y</text><text x="949" y="527" fill="#00f" style="font-size:10px">Z</text>
 <text x="845" y="171" fill="#00007c" style="font-size:9px">150.000</text>
 <text x="365" y="117" fill="#111">CC1 : Dimensionamento da carga</text><text x="365" y="131" fill="#111">Cargas [kN/m]</text></g></svg>`});

define('table-panel',`:host{display:flex;flex-direction:column;height:236px;flex:none;border-top:2px solid #dde0e8;background:#f0f0f0;font:11px/14px "Liberation Sans",sans-serif;color:#111}
 .cap{height:24px;background:#bcc3d0;border-top:5px solid #cfd4de;display:flex;align-items:center;justify-content:flex-end;padding-right:6px;flex:none}
 .cap button{border:0;background:none;padding:0;width:10px;height:10px}.cap svg{display:block}
 .tb{height:25px;flex:none;background:linear-gradient(#e9edf6,#cfd3de);border-bottom:1px solid #777}
 tool-strip{margin-left:471px;width:240px;background:none;border:0}
 .area{flex:1;min-height:0;display:flex;padding-top:4px}
 .tw{flex:1;overflow:hidden;min-width:0}
 table{border-collapse:collapse;table-layout:fixed;width:1540px;background:#fff}
 th,td{border:1px solid #8c8c8c;padding:0;height:16px;font-weight:400;text-align:center;overflow:hidden}
 thead th{background:#f0f0f0;border-bottom-color:#ddd}thead .h th{background:#e4e4e4;border:1px solid #666;height:14px;line-height:12px}
 .s th{height:16px} .nb{border-top:0}
 .sb{width:16px;background:#f0f0f0;display:flex;flex-direction:column;margin-right:3px}
 .sb svg{width:16px;height:15px}.sb i{height:93px;background:#cdcdcd;margin-bottom:3px}
 .tabs{height:17px;flex:none;border-top:1px solid #555;display:flex;margin-bottom:19px;padding-left:472px}
 .tabs a{color:#111;text-decoration:none;padding:0 4px;border-right:1px solid #555;border-bottom:1px solid #888;line-height:17px}
 .tabs button{margin-left:auto;border:1px solid #999;background:#f6f6f6;padding:0;width:17px;font-size:8px;line-height:15px}`,
 `<div class="cap"><button aria-label="Fechar"><svg viewBox="0 0 10 10"><path d="M1 1l8 8M9 1L1 9" stroke="#555" stroke-width="1.500"/></svg></button></div>
 <div class="tb"><tool-strip items="| tedit | thand glasses excel calc | win2 fx fxr"></tool-strip></div>
 <div class="area"><div class="tw"><table><colgroup><col style="width:486px"><col style="width:42px"><col style="width:42px"><col style="width:48px"><col style="width:42px"><col style="width:64px"><col></colgroup>
 <thead><tr class="h"><th></th><th>G</th><th>H</th><th>I</th><th>J</th><th>K</th><th></th></tr><tr class="s"><th></th><th colspan="2">Articulação nº</th><th>Excentr.</th><th>Divisão</th><th>Forma</th><th></th></tr><tr class="s"><th class="nb"></th><th>Início</th><th>Fim</th><th class="nb">Nº</th><th class="nb">Nº</th><th class="nb">variável</th><th class="nb"></th></tr></thead>
 <tbody>${'<tr><td></td><td></td><td></td><td></td><td></td><td></td><td></td></tr>'.repeat(5)}</tbody></table></div>
 <div class="sb"><svg viewBox="0 0 16 15"><path d="M4 10l4-4 4 4" fill="none" stroke="#444" stroke-width="1.500"/></svg><i></i><svg viewBox="0 0 16 15"><path d="M4 5l4 4 4-4" fill="none" stroke="#444" stroke-width="1.500"/></svg></div></div>
 <div class="tabs"><a href="#">s elásticos de superfícies</a><a href="#">Articulações de linha</a><button aria-label="Último separador">▶|</button></div>`);

define('status-bar',`:host{display:flex;height:21px;flex:none;align-items:center;background:linear-gradient(#e4e7ee,#b9bdc9 45%,#a9aebb 60%,#c3c8d2);border-top:1px solid #9a9fab;color:#222c40;white-space:nowrap}
 .m{flex:1;padding-left:4px;font-size:10px}
 .b{display:flex;gap:3px;margin-right:103px}
 button{font:inherit;line-height:16px;height:18px;padding:0 3px;border:1px solid #f2f3f6;border-left-color:#111;border-top-color:#111;background:none;color:inherit}
 .c{border-left:1px solid #8b90a0;padding-left:2px}`,
 `<span class="m">Ponto da malha</span><div class="b"><button>AJUSTAR</button><button>GRELHA</button><button>CARTES</button><button>AJUST. OBJ.</button><button>LINHAS AUX.</button><button>DXF</button></div>
 <span style="width:88px">CS: Global XYZ</span><span class="c" style="width:88px">Plano: XY</span><span class="c" style="width:74px">X:&nbsp; -1.000 m</span><span class="c" style="width:74px">Y:&nbsp; 29.000 m</span><span class="c" style="width:73px">Z:&nbsp; 0.000 m</span>`);

define('group-box',`:host{display:flex;flex-direction:column}
 h3{margin:0;height:14px;font:inherit;line-height:14px;padding-left:2px;color:#24527e;background:#dbe5f4;clip-path:polygon(0 0,calc(100% - 9px) 0,100% 9px,100% 100%,0 100%);flex:none}
 .b{flex:1;min-height:0;display:flex;flex-direction:column;background:#f0f4fa;border-right:1px solid #b4b4f2;border-bottom:1px solid #a8a8ec;padding:3px 2px 0}
 :host([flush]) .b{padding:0 1px 0 0}:host([bare]) h3{display:none}:host([bare]) .b{border-top:1px solid #dbe5f4;padding:0 3px}`,
 e=>`<h3>${at(e,'caption')}</h3><div class="b"><slot></slot></div>`);

define('check-line',`:host{display:flex;min-height:18px;align-items:center}:host([multi]){min-height:0}
 label{display:flex;gap:2px;align-items:center;line-height:11px;white-space:nowrap}
 :host([multi]) label{align-items:flex-start}
 input{appearance:none;margin:0;width:11px;height:11px;flex:none;border:1px solid #333;background:#fff;display:flex;align-items:center;justify-content:center}
 input[type=radio]{border-radius:50%}
 input[type=radio]:checked::before{content:"";width:5px;height:5px;border-radius:50%;background:#222}
 input[type=checkbox]:checked::before{content:"";width:7px;height:3px;border:solid #222;border-width:0 0 1px 1px;transform:rotate(-48deg);margin-top:-2px}
 :host([off]) label{color:#838383}:host([off]) input{border-color:#c8c8c8}:host([off]) input::before{opacity:.45}`,
 e=>`<label><input type="${at(e,'type','checkbox')}" ${e.hasAttribute('on')?'checked':''} ${e.hasAttribute('off')?'disabled':''}><span><slot></slot></span></label>`);

define('spin-box',`:host{display:inline-flex;height:17px;flex:none;border:1px solid #a6a6a6;background:#fff}
 input{flex:1;min-width:0;width:0;border:0;padding:0 4px 0 0;margin:0;text-align:right;font:inherit;color:#222;background:none;height:15px}
 .s{display:flex;flex-direction:column;width:14px;background:#d8d8d8;padding:1px;gap:1px}
 button{flex:1;border:1px solid #b4b4b4;background:#f2f2f2;padding:0;display:flex;align-items:center;justify-content:center}
 button::before{content:"";border:solid transparent;border-width:0 2px 3px;border-bottom-color:#222}
 button+button::before{border-width:3px 2px 0;border-top-color:#222}
 :host([off]){border-color:#c8c8c8}:host([off]) input{color:#838383}:host([off]) button::before{opacity:.6}`,
 e=>`<input aria-label="${at(e,'label','Valor')}" value="${at(e,'value')}" ${e.hasAttribute('off')?'disabled':''}><span class="s"><button tabindex="-1" aria-label="Aumentar"></button><button tabindex="-1" aria-label="Diminuir"></button></span>`,
 e=>{e.style.width=at(e,'w','46')+'px'});

define('combo-box',`:host{display:block;height:18px;position:relative;flex:none}
 select{appearance:none;width:100%;height:100%;border:1px solid #9c9c9c;background:#e3e3e3;font:inherit;color:#111;padding:0 16px 0 3px;display:block;margin:0;border-radius:0}
 :host([plain]) select{background:#fff;border-color:#8a8a8a;padding-left:4px}
 :host([off]) select{border-color:#ccc;background:#fff}
 svg{position:absolute;right:4px;top:6px;width:8px;height:6px;pointer-events:none}
 i{position:absolute;left:2px;top:3px;bottom:3px;width:226px;max-width:calc(100% - 18px);background:linear-gradient(90deg,#cfcfcf 21px,#e9e9e9 21px)}`,
 e=>`<select aria-label="${at(e,'label','Opção')}" ${e.hasAttribute('off')?'disabled':''}><option>${at(e,'value')}</option></select>${e.hasAttribute('off')?'<i></i>':''}<svg viewBox="0 0 8 6"><path d="M1 1l3 3 3-3" fill="none" stroke="#555"/></svg>`);

define('icon-button',`:host{display:block;flex:none}button{width:21px;height:19px;border:1px solid #adadad;background:#e3e3e3;padding:0;display:flex;align-items:center;justify-content:center}app-icon{width:15px;height:15px}:host([off]) button{background:#cfcfcf;border-color:#c4c4c4}`,
 e=>`<button aria-label="${at(e,'name')}"><app-icon name="${at(e,'name')}"></app-icon></button>`);

define('tab-list',`:host{display:flex;align-items:flex-end;flex:none}
 button{height:15px;font:inherit;line-height:13px;color:#222;background:#f0f0f0;border:1px solid #d8d8d8;border-bottom:0;border-left-width:0;padding:0 5px}
 button:first-child{border-left-width:1px}
 .on{height:18px;background:#fff;margin-bottom:-1px;position:relative;padding:0 5px 3px;border-left-width:1px}`,
 e=>at(e,'items').split('|').map(t=>t[0]==='*'?`<button role="tab" aria-selected="true" class="on">${t.slice(1)}</button>`:`<button role="tab">${t}</button>`).join(''));

define('dialog-window',`:host{display:flex;flex-direction:column;position:absolute;background:#f0f0f0;border:1px solid #6f6f6f;border-bottom-width:2px;font:9px/11px Roboto,"Liberation Sans",sans-serif;color:#1c1c1c}
 header{height:25px;background:#fff;display:flex;align-items:center;justify-content:space-between;padding:0 7px 0 6px;font-size:10px;color:#222;flex:none}
 header button{border:0;background:none;padding:0;width:10px;height:10px}header svg{display:block}
 footer{display:flex;align-items:center;gap:4px;padding:9px 0 0;height:28px;flex:none}
 footer .x{margin-left:auto;display:flex;gap:8px}
 footer .o{width:62px;height:18px;font:inherit;border:1px solid #adadad;background:#e3e3e3;padding:0;color:#111}
 footer .d{border:2px solid #0078d7}
 footer icon-button+icon-button{margin-left:4px}footer icon-button+icon-button+icon-button{margin-left:0}
 main{display:flex;flex-direction:column;padding:6px 6px 0 4px}
 .page{background:#fff;border:1px solid #dcdcdc;padding:7px 6px 7px}`,
 e=>`<header><span>${at(e,'caption')}</span><button aria-label="Fechar"><svg viewBox="0 0 10 10"><path d="M1 1l8 8M9 1L1 9" stroke="#222"/></svg></button></header>
 <main><tab-list items="${at(e,'tabs')}"></tab-list><div class="page"><slot></slot></div>
 <footer><icon-button name="help"></icon-button><icon-button name="open"></icon-button><icon-button name="save2"></icon-button><div class="x"><button class="o d">OK</button><button class="o">Cancelar</button></div></footer></main>`);

const form=`.r{display:flex;align-items:center;height:18px;white-space:nowrap}.l{display:flex;align-items:center;height:16px;white-space:nowrap}
 .e{display:flex;align-items:flex-end;white-space:nowrap}.e>.t{align-self:flex-start}.t{white-space:nowrap}
 .n1{margin-left:14px}.n2{margin-left:27px}.g{color:#9a9a9a}
 .m1{margin-top:1px}.m2{margin-top:2px}.m4{margin-top:4px}.m5{margin-top:5px}.m7{margin-top:7px}.m8{margin-top:8px}.m10{margin-top:10px}.m12{margin-top:12px}.m14{margin-top:14px}.m20{margin-top:20px}
 sub{font-size:8px;line-height:0;vertical-align:-1px}.u{margin-left:4px}`;

define('load-case-form',`:host{display:flex;gap:5px}${form}
 .list{width:229px}.lv{flex:1;background:#fff;display:flex;flex-direction:column;border-left:1px solid #b8b8b8}
 .sel{display:flex;height:16px;align-items:center;background:#0078d7;color:#fff;border-top:1px solid #777}
 .sel b{background:#000;width:21px;line-height:9px;text-align:center;font-weight:400;font-size:8px;margin:0 3px 0 1px}
 .sel .c{width:39px;align-self:stretch;line-height:15px;border-right:1px solid #444}
 .sel .d{padding-left:3px}.fill{flex:1;width:64px;border-right:1px solid #444}
 .hs{height:14px;background:#f0f0f0;display:flex;align-items:center;padding:0 4px;justify-content:space-between}
 .hs i{width:104px;height:13px;background:#cdcdcd;margin-right:93px}.hs svg{width:6px;height:8px}
 .btn{display:flex;gap:4px;padding:5px 2px 1px 3px;height:26px}.btn :nth-child(5){margin-left:4px}.btn :nth-child(8){margin-left:auto}
 .right{flex:1;display:flex;flex-direction:column}.top{display:flex;gap:5px;height:40px}
 .sub{padding:6px 0 0 1px}.pg{border:1px solid #dcdcdc;border-left-color:#888;display:flex;gap:6px;padding:7px 2px 3px 5px}
 .a{width:268px;display:flex;flex-direction:column}.b{flex:1;display:flex;flex-direction:column}
 .lab{width:154px}.k{width:134px}.kk{width:20px}
 input.no{width:38px;height:18px;border:1px solid #c8c8c8;background:#fff;font:inherit;text-align:right;padding:0 5px;color:#888}`,
 `<group-box class="list" caption="Casos de carga existentes" flush><div class="lv"><div class="sel"><b>G</b><span class="c">CC1</span><span class="d">Dimensionamento da carga</span></div><div class="fill"></div><div class="hs"><svg viewBox="0 0 6 8"><path d="M5 1L2 4l3 3" fill="none" stroke="#333" stroke-width="1.500"/></svg><i></i><svg viewBox="0 0 6 8"><path d="M1 1l3 3-3 3" fill="none" stroke="#333" stroke-width="1.500"/></svg></div></div>
 <div class="btn"><icon-button name="nwin"></icon-button><icon-button name="cwin"></icon-button><icon-button name="cmb" off></icon-button><icon-button name="ab"></icon-button><icon-button name="chk"></icon-button><icon-button name="uchk" off></icon-button><icon-button name="swp"></icon-button><icon-button name="del"></icon-button></div></group-box>
 <div class="right"><div class="top"><group-box caption="CC nº" style="width:84px"><input class="no" aria-label="CC nº" value="1" disabled></group-box><group-box caption="Designação do caso de carga" style="flex:1"><combo-box plain label="Designação do caso de carga" value="Dimensionamento da carga"></combo-box></group-box><group-box caption="A resolver" style="width:137px"><check-line on></check-line></group-box></div>
 <tab-list class="sub" items="Geral|*Parâmetros de cálculo"></tab-list>
 <div class="pg"><div class="a">
 <group-box caption="Método de análise" style="height:92px"><check-line type="radio" on>Análise geométrica linear</check-line><check-line type="radio">Análise de segunda ordem (P-Delta / P-delta)</check-line><check-line type="radio">Análise de grandes deformações</check-line><check-line type="radio">Análise pós-crítica</check-line></group-box>
 <group-box class="m8" caption="Método de solução para o sistema" style="height:144px"><div class="l">Equações algébricas não-lineares:</div><check-line type="radio" on off>Newton-Raphson</check-line><check-line type="radio" off>Newton-Raphson combinado com Picard</check-line><check-line type="radio" off>Picard</check-line><check-line type="radio" off>Newton-Raphson com a constante da matriz de rigidez</check-line><check-line type="radio" off>Newton-Raphson modificado</check-line><check-line type="radio" off>Relaxação dinâmica</check-line></group-box>
 <group-box class="m8" caption="Carregamento aumentada por incrementos" style="flex:1"><check-line on>Ativar</check-line>
 <div class="r"><span class="n1 k">Fator de carga inicial</span><span class="kk">k<sub>0</sub> :</span><spin-box w="66" value="10.000" label="Fator de carga inicial"></spin-box><span class="u">[-]</span></div>
 <div class="r"><span class="n1 k">Incremento do fator de carga</span><span class="kk">Δ<sub>k</sub> :</span><spin-box w="66" value="0.100" label="Incremento do fator de carga"></spin-box><span class="u">[-]</span></div>
 <div class="e m5" style="height:24px"><span class="t n1 lab">Refinamento do último incremento<br>de carga</span><spin-box w="39" value="10" label="Refinamento do último incremento"></spin-box></div>
 <div class="r m12"><check-line class="n1 lab" on>Critério de paragem para:</check-line><combo-box style="width:66px" value="u" label="Critério de paragem"></combo-box></div>
 <div class="r m5"><span class="n2" style="width:57px">Nó nº:</span><combo-box style="width:51px" value="Qualquer" label="Nó nº"></combo-box><icon-button name="pick" style="margin:0 8px 0 4px"></icon-button><spin-box w="66" value="500.0" label="Limite"></spin-box><span class="u">[mm]</span></div>
 <check-line class="n1 m10">Usar carga inicial (não aumentando):</check-line><combo-box off class="n1 m2" style="width:248px" label="Carga inicial"></combo-box></group-box></div>
 <div class="b"><group-box caption="Opções" style="height:434px">
 <div class="r m1"><check-line style="width:186px">Modificar carregamento com o fator:</check-line><spin-box off w="65" label="Fator"></spin-box><span class="u g">[-]</span></div>
 <check-line off class="n1">Dividir os resultados pelo fator de carga</check-line>
 <div class="l m8">Ativar fatores de rigidez de:</div><check-line>Materiais (coeficiente parcial γ<sub>M</sub>)</check-line><check-line on>Secções (fator para I<sub>T</sub>, I<sub>y</sub>, I<sub>z</sub>, A, A<sub>y</sub>, A<sub>z</sub>)</check-line><check-line on>Barras (tipo de definição)</check-line><check-line on>Superfícies (tipo de definição)</check-line>
 <div class="l m2">Ativar configuração especial no navegador:</div><check-line>Modificar rigidez</check-line><check-line>Opções extra</check-line><check-line>Desativar</check-line>
 <check-line on off class="m4">Considerar efeitos favoráveis devido à tração das barras</check-line>
 <check-line on off multi class="m10">Relacionar esforços internos à estrutura<br>deformada para:</check-line>
 <check-line on off class="n1 m4"><u>F</u>orças normais N</check-line><check-line on off class="n1">F<u>o</u>rças de corte V<sub>y</sub> e V<sub>z</sub></check-line><check-line on off class="n1"><u>M</u>omentos M<sub>y</sub>, M<sub>z</sub> e M<sub>T</sub></check-line>
 <check-line off multi class="m4">Tentar calcular mecanismo cinemático<br>(adicionar rigidez baixa na primeira iteração)</check-line>
 <div class="r m7" style="height:22px"><check-line multi style="width:199px">Aplicar número separado de incrementos<br>de carga para este caso de carga:</check-line><spin-box off w="38" label="Incrementos"></spin-box></div>
 <check-line on multi class="m5">Guardar resultados de todos os<br>incrementos de carga</check-line>
 <check-line>Desativar não-linearidades para este caso de carga</check-line></group-box>
 <group-box bare class="m2" style="flex:1"><icon-button name="bolt" style="align-self:flex-end;height:19px"></icon-button></group-box></div></div></div>`);

define('calc-params-form',`:host{display:grid;grid-template-columns:249px 244px 1fr;grid-template-rows:324px 203px;gap:8px 6px;padding-left:1px}${form}
 .cl{width:180px}.o{display:flex}.o>.t{width:108px;padding-top:2px}.o .c{padding-top:5px}.o check-line{min-height:16px}
 .p{display:flex;margin-left:14px}.p>.t{width:126px;color:#9a9a9a}.p .v{display:flex;flex-direction:column}.v .l{color:#9a9a9a}.end{justify-content:flex-end}
 hr{border:0;border-top:1px solid #8c8c8c;width:206px;margin:11px 0 0 3px}.col{display:flex;flex-direction:column;gap:6px}`,
 `<group-box caption="Configuração">
 <div class="r"><span class="cl">Número máximo de iterações:</span><spin-box value="100" label="Número máximo de iterações"></spin-box></div>
 <div class="l m8">Número de incrementos de carga para</div>
 <div class="r"><span class="cl">- Casos de carga:</span><spin-box value="5" label="Casos de carga"></spin-box></div>
 <div class="r"><span class="cl">- Combinações de carga</span><spin-box value="5" label="Combinações de carga"></spin-box></div>
 <div class="e m7" style="height:22px"><span class="t cl">Número máximo de incrementos de carga:</span><spin-box value="1000" label="Número máximo de incrementos"></spin-box></div>
 <div class="l m7">Número de divisões das barras para</div>
 <div class="r"><span class="cl">- Diagramas de resultados:</span><spin-box value="10" label="Diagramas de resultados"></spin-box></div>
 <div class="e m2"><span class="t cl">- Tipos de barras especiais<br>&nbsp;&nbsp; (cabo, fundação elástica, secção<br>&nbsp;&nbsp; variável, não-linearidade):</span><spin-box value="10" label="Barras especiais"></spin-box></div>
 <div class="r m2"><span class="cl">- Determinação dos valores máx/mín:</span><spin-box value="10" label="Valores máx/mín"></spin-box></div>
 <div class="e m12" style="height:26px"><span class="t cl">Subdivisão da malha de EF para resultados<br>gráficos:</span><spin-box value="0" label="Subdivisão da malha"></spin-box></div>
 <div class="e m12" style="height:36px"><span class="t cl">Percentagem de iterações do método de<br>Picard em combinação com<br>Newton-Raphson:</span><spin-box value="5" label="Percentagem"></spin-box><span class="u" style="padding-bottom:3px">[%]</span></div></group-box>
 <group-box caption="Opções">
 <check-line multi on class="m5">Ativar a resistência ao corte das barras<br>(áreas da secção A<sub>y</sub>, A<sub>z</sub>)</check-line>
 <check-line multi on class="m7">Ativar divisões de barra para grandes deformações ou<br>análise pós-crítica, deformação inicial de outros CC/CO</check-line>
 <check-line multi on class="m5">Modificar rigidez (material, secções, barras<br>casos e combinações de cargas)</check-line>
 <check-line multi on class="m5">Considerar opções extra<br>(combinações e casos de carga)</check-line>
 <check-line on class="m20">Verificar esforços críticos de barras</check-line><check-line on>Calcular valores máximos de deformações</check-line>
 <check-line multi class="m4">Solucionador direto assimétrico caso pedido pelo<br>modelo não-linear</check-line>
 <div class="o m7"><span class="t">Método para o sistema<br>de equações:</span><div><check-line type="radio" on>Direto</check-line><check-line type="radio">Iterativo</check-line></div></div>
 <div class="o m2"><span class="t c">Teoria de flexão de lajes:</span><div><check-line type="radio" on>Mindlin</check-line><check-line type="radio">Kirchhoff</check-line></div></div>
 <div class="o m2"><span class="t">Versão do solucionador<br>de equações:</span><div><check-line type="radio">32 bits</check-line><check-line type="radio" on>64 bits</check-line></div></div></group-box>
 <group-box caption="Precisão e tolerância"><check-line>Alterar a configuração padrão</check-line>
 <div class="p m5"><span class="t">Precisão do critério de<br>convergência para cálculo<br>não-linear:</span><div class="v"><span class="l" style="color:#222">[0,01 ... 100]</span><spin-box off w="56" class="m2"></spin-box></div></div>
 <div class="p m4"><span class="t">Tolerância para a deteção de<br>instabilidade:</span><div class="v end" style="height:25px"><spin-box off w="56"></spin-box></div></div>
 <div class="p m4"><span class="t">Definição relativa do intervalo<br>de tempo para o relaxamento<br>dinâmico:</span><div class="v"><spin-box off w="56" class="m7"></spin-box><span class="l m1">(fator baixo -&gt; mais precisão)</span></div></div>
 <div class="p m10" style="align-items:center"><span class="t">Robustez do cálculo iterativo:</span><div class="v"><span class="l">[1,00 ... 100]</span><spin-box off w="56" class="m2"></spin-box></div></div>
 <div class="r m8 g n1" style="justify-content:space-between;padding-right:4px"><span>Configuração para cabos e membranas...</span><icon-button name="cfg" off></icon-button></div>
 <check-line class="m14">Rigidez de penalidade associada a modos de energia nula para</check-line>
 <div class="p m1"><span class="t"></span><span class="g">[0,01 ... 100]</span></div>
 <div class="p" style="align-items:center"><span class="t">- elementos de casca:</span><spin-box off w="56"></spin-box></div>
 <div class="p m4" style="align-items:center"><span class="t">- elementos de sólido:</span><spin-box off w="56"></spin-box></div>
 <div class="p m4"><span class="t"></span><span class="g t">(fator inferior -&gt; penalidade inferior)</span></div></group-box>
 <group-box caption="Não-linearidades"><div class="l" style="height:14px">Ativar:</div><check-line off>Apoios</check-line><check-line off>Barras devido ao tipo de barra</check-line><check-line off>Articulações de barras, libertações</check-line><check-line off>Não-linearidades das barras</check-line><check-line off>Sólidos do tipo 'Contacto'</check-line><check-line off>Materiais com modelo não-linear</check-line>
 <check-line off multi class="n1 m2">Número de incrementos de carga para determinação<br>automática pelo método Newton-Raphson</check-line><hr><check-line off class="m5">Modelo do material isotrópico termo-elástico</check-line></group-box>
 <group-box caption="Reativação de barras que falharam"><check-line on off multi class="m2">Verificar deformação de barras que falharam e<br>eventualmente reativar</check-line>
 <div class="r g m4"><span class="n1" style="width:159px">Número máximo de reativações:</span><spin-box off w="45" value="3" label="Número máximo de reativações"></spin-box></div>
 <check-line off class="m12">Tratamento especial</check-line><check-line off multi type="radio" class="n1 m4">As barras que falham são removidas<br>individualmente nas respetivas iterações</check-line>
 <check-line on off type="radio" class="n1 m8">Atribuir rigidez reduzida às barras que falharam</check-line>
 <div class="r g m7"><span class="n2" style="width:146px">Fatores de redução da rigidez:</span><spin-box off w="55" value="1000" label="Fatores de redução da rigidez"></spin-box></div></group-box>
 <div class="col"><group-box caption="Pressão interna do tubo" style="flex:1"><check-line multi class="m2">Deslocamentos devido a cargas de barras do tipo 'Pressão<br>interna do tubo' (efeito de Bourdon)</check-line></group-box>
 <group-box bare style="height:25px"><div style="display:flex;gap:4px;justify-content:flex-end;padding-top:2px"><icon-button name="cl1"></icon-button><icon-button name="cl1"></icon-button></div></group-box></div>`);

define('callout-layer',`:host{position:absolute;inset:0;pointer-events:none}svg{display:block;width:100%;height:100%;overflow:hidden}`,
 `<svg><defs><filter id="s" x="-10%" y="-10%" width="120%" height="130%"><feDropShadow dx="3" dy="3" stdDeviation="2.500" flood-color="#000" flood-opacity=".5"/></filter></defs>
 <rect x="1084" y="763" width="249" height="207" fill="none" stroke="#c00000" stroke-width="4"/>
 <path d="M503 667l39-5-3 12L1085 860l-2 8L535 682l-5 12z" fill="#c00000" filter="url(#s)"/></svg>`);

define('rfem-app',`:host{display:flex;flex-direction:column;height:100vh;position:relative;overflow:hidden;background:#f0f0f0}
 .work{flex:1;min-height:0;display:flex}.doc{flex:1;min-width:0;display:flex;flex-direction:column}
 .d1{left:12px;top:371px;width:823px;padding-bottom:4px}.d2{left:1072px;top:375px;width:831px;padding-bottom:4px}`,
 `<app-header></app-header><div class="work"><project-navigator></project-navigator><div class="doc"><model-view></model-view><table-panel></table-panel></div></div><status-bar></status-bar>
 <dialog-window class="d1" caption="Editar casos e combinações de cargas" tabs="*Casos de carga|Combinações de cargas|Combinações de resultados"><load-case-form></load-case-form></dialog-window>
 <dialog-window class="d2" caption="Parâmetros de cálculo" tabs="Casos de carga|Combinações de cargas|Combinações de resultados|*Parâmetros de cálculo globais|Diagramas de cálculo"><calc-params-form></calc-params-form></dialog-window>
 <callout-layer></callout-layer>`);
</script>
</body>
</html>
